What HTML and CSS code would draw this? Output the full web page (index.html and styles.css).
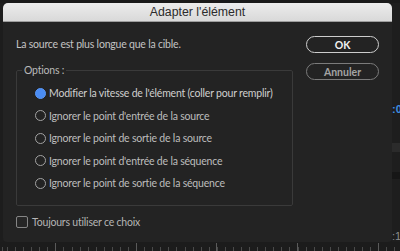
FILE: index.html
```html
<!DOCTYPE html>
<html lang="fr">
<head>
<meta charset="utf-8">
<title>Adapter l'élément</title>
<link rel="stylesheet" href="styles.css">
</head>
<body>
<div class="app">
  <div class="top-strip"></div>
  <div class="left-strip"></div>
  <div class="dialog">
    <div class="titlebar">Adapter l'élément</div>
    <div class="content">
      <div class="main">
        <p class="message">La source est plus longue que la cible.</p>
        <fieldset class="options">
          <legend>Options :</legend>
          <label class="opt"><input type="radio" name="fit" checked><span>Modifier la vitesse de l'élément (coller pour remplir)</span></label>
          <label class="opt"><input type="radio" name="fit"><span>Ignorer le point d'entrée de la source</span></label>
          <label class="opt"><input type="radio" name="fit"><span>Ignorer le point de sortie de la source</span></label>
          <label class="opt"><input type="radio" name="fit"><span>Ignorer le point d'entrée de la séquence</span></label>
          <label class="opt"><input type="radio" name="fit"><span>Ignorer le point de sortie de la séquence</span></label>
        </fieldset>
        <label class="always"><input type="checkbox"><span>Toujours utiliser ce choix</span></label>
      </div>
      <div class="buttons">
        <button class="btn btn-ok">OK</button>
        <button class="btn btn-cancel">Annuler</button>
      </div>
    </div>
  </div>
  <div class="right-strip">
    <span class="tc tc0">:0</span>
    <span class="band"></span>
    <span class="band-dark"></span>
    <span class="tc tc1">:1</span>
  </div>
  <div class="ruler"></div>
</div>
</body>
</html>
```

FILE: styles.css
```css
html, body {
  margin: 0;
  padding: 0;
  background: #1c1c1c;
  width: 400px;
  height: 251px;
  overflow: hidden;
}

.app {
  display: grid;
  grid-template-columns: 3px 389px 8px;
  grid-template-rows: 3px 239px 9px;
  width: 400px;
  height: 251px;
  font-family: Lato, "Open Sans", sans-serif;
}

.top-strip {
  grid-column: 1 / 4;
  grid-row: 1;
  background: #1a1a1a;
}

.left-strip {
  grid-column: 1;
  grid-row: 2;
  background: #1d1d1d;
}

.dialog {
  grid-column: 2;
  grid-row: 2;
  background: #232323;
  border-radius: 5px 5px 4px 4px;
  overflow: hidden;
  display: flex;
  flex-direction: column;
}

.titlebar {
  height: 18px;
  line-height: 19px;
  border-bottom: 1px solid #9d9d9d;
  background: linear-gradient(#ececec, #d9d9d9);
  color: #2b2b2b;
  font-family: "Liberation Sans", Arial, sans-serif;
  font-size: 12.3px;
  text-align: center;
}

.content {
  display: grid;
  grid-template-columns: 1fr 73px;
  padding: 14px 13px 0 13px;
}

.main {
  display: flex;
  flex-direction: column;
  align-items: flex-start;
  letter-spacing: -0.2px;
}

.message {
  margin: 0;
  height: 17px;
  line-height: 17px;
  font-size: 10.5px;
  color: #c4c4c4;
}

.options {
  margin: 11px 0 0 0;
  width: 277px;
  box-sizing: border-box;
  border: 1px solid #3a3a3a;
  border-radius: 2px;
  padding: 5px 0 10px 5px;
  display: flex;
  flex-direction: column;
}

.options legend {
  padding: 0 2px;
  line-height: 13px;
  font-size: 10.5px;
  color: #b9b9b9;
}

.opt {
  height: 22.5px;
  display: flex;
  align-items: center;
  gap: 3px;
  margin-left: 13px;
  font-size: 10.5px;
  color: #bdbdbd;
}

.opt input {
  appearance: none;
  -webkit-appearance: none;
  margin: 0;
  width: 11px;
  height: 11px;
  box-sizing: border-box;
  border-radius: 50%;
  border: 1.5px solid #a3a3a3;
  background: transparent;
  flex: none;
}

.opt input:checked {
  border: 1px solid #5a98f6;
  background: #4a8cf3;
}

.opt:first-of-type span {
  color: #cfcfcf;
}

.always {
  margin-top: 10px;
  height: 13px;
  display: flex;
  align-items: center;
  gap: 4px;
  font-size: 10.5px;
  color: #b5b5b5;
}

.always input {
  appearance: none;
  -webkit-appearance: none;
  margin: 0;
  width: 12px;
  height: 12px;
  box-sizing: border-box;
  border: 1.5px solid #858585;
  border-radius: 2px;
  background: #262626;
  flex: none;
}

.buttons {
  display: flex;
  flex-direction: column;
  gap: 10px;
}

.btn {
  width: 73px;
  height: 17px;
  box-sizing: border-box;
  border-radius: 9px;
  background: transparent;
  font-family: Lato, "Open Sans", sans-serif;
  font-size: 10.5px;
  padding: 0;
  line-height: 14px;
}

.btn-ok {
  border: 1.5px solid #cdcdcd;
  color: #f2f2f2;
  font-weight: 700;
}

.btn-cancel {
  border: 1.5px solid #7b7b7b;
  color: #a3a3a3;
  font-weight: 700;
}

.right-strip {
  grid-column: 3;
  grid-row: 2;
  background: #1e1e1e;
  display: flex;
  flex-direction: column;
  overflow: hidden;
}

.tc {
  font-family: "Liberation Sans", Arial, sans-serif;
  font-size: 11px;
  line-height: 11px;
  white-space: nowrap;
}

.tc0 {
  margin-top: 101px;
  color: #3d8fe3;
  font-weight: 700;
}

.band {
  margin-top: 28px;
  height: 10px;
  background: #2b2b2b;
}

.band-dark {
  margin-top: 20px;
  height: 8px;
  background: #161616;
}

.tc1 {
  margin-top: 52px;
  color: #8d8d8d;
}

.ruler {
  grid-column: 1 / 4;
  grid-row: 3;
  background-color: #1c1c1c;
  background-image:
    repeating-linear-gradient(90deg, #5a5a5a 0 1px, transparent 1px 80.7px),
    repeating-linear-gradient(90deg, #4a4a4a 0 1px, transparent 1px 8.07px);
  background-size: 100% 8px, 100% 4px;
  background-position: 55px bottom, 7px bottom;
  background-repeat: repeat-x;
}
```
